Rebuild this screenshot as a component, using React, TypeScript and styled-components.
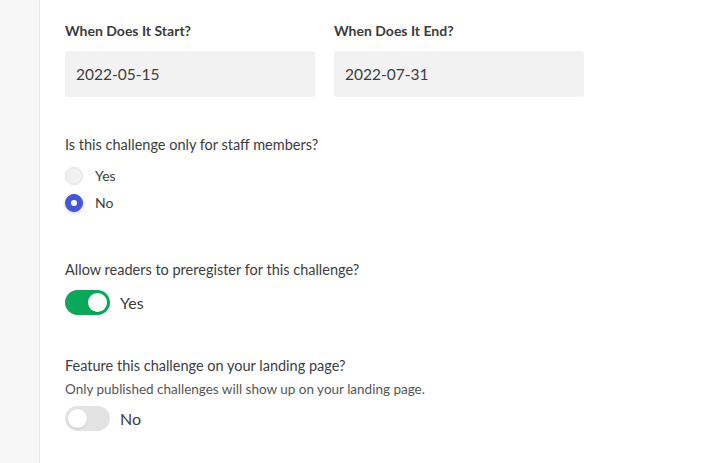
import React, { useState } from "react";
import styled, { createGlobalStyle } from "styled-components";

const Global = createGlobalStyle`
  html, body { margin: 0; padding: 0; background: #fff; }
  body { font-family: Lato, "Open Sans", "Liberation Sans", sans-serif; color: #3a3a3a; }
  * { box-sizing: border-box; }
`;

const Layout = styled.div`
  display: flex;
  min-height: 463px;
`;

const Sidebar = styled.aside`
  width: 40px;
  flex: none;
  background: #f7f7f7;
  border-right: 1px solid #e6e6e6;
`;

const Main = styled.main`
  flex: 1;
  padding: 22px 25px 20px 25px;
`;

const DateRow = styled.div`
  display: grid;
  grid-template-columns: 250px 250px;
  column-gap: 19px;
`;

const Field = styled.div`
  display: flex;
  flex-direction: column;
  gap: 11px;
`;

const FieldLabel = styled.label`
  font-size: 14px;
  font-weight: 700;
  line-height: 18px;
  color: #3b3b3b;
`;

const DateInput = styled.input`
  height: 46px;
  border: none;
  border-radius: 3px;
  background: #f2f2f2;
  padding: 0 11px;
  font-family: inherit;
  font-size: 15.5px;
  color: #3d3d3d;
  outline: none;
`;

const Section = styled.section<{ $top: number }>`
  margin-top: ${(p) => p.$top}px;
  display: flex;
  flex-direction: column;
`;

const Question = styled.div`
  font-size: 14.5px;
  line-height: 20px;
  color: #3d3d3d;
`;

const Hint = styled.div`
  margin-top: 4px;
  font-size: 13.5px;
  line-height: 18px;
  color: #555;
`;

const RadioList = styled.div`
  margin-top: 7px;
  display: flex;
  flex-direction: column;
`;

const RadioRow = styled.label`
  display: flex;
  align-items: center;
  height: 27px;
  gap: 12px;
  font-size: 14px;
  color: #3d3d3d;
  cursor: pointer;
`;

const RadioDot = styled.span<{ $checked: boolean }>`
  width: 18px;
  height: 18px;
  border-radius: 50%;
  flex: none;
  position: relative;
  background: ${(p) => (p.$checked ? "#4656db" : "#f1f1f1")};
  border: 1px solid ${(p) => (p.$checked ? "#4656db" : "#e2e2e2")};
  box-shadow: ${(p) => (p.$checked ? "0 1px 3px rgba(70,86,219,0.35)" : "none")};
  &::after {
    content: "";
    display: ${(p) => (p.$checked ? "block" : "none")};
    position: absolute;
    left: 50%;
    top: 50%;
    width: 6px;
    height: 6px;
    margin: -3px 0 0 -3px;
    border-radius: 50%;
    background: #fff;
  }
`;

const ToggleRow = styled.label<{ $top: number }>`
  margin-top: ${(p) => p.$top}px;
  display: flex;
  align-items: center;
  gap: 10px;
  font-size: 16px;
  color: #3d3d3d;
  cursor: pointer;
`;

const Track = styled.span<{ $on: boolean }>`
  width: 45px;
  height: 25px;
  border-radius: 13px;
  flex: none;
  position: relative;
  background: ${(p) => (p.$on ? "#0ba85a" : "#e3e3e3")};
  transition: background 0.2s;
`;

const Knob = styled.span<{ $on: boolean }>`
  position: absolute;
  top: 3px;
  left: ${(p) => (p.$on ? "23px" : "3px")};
  width: 19px;
  height: 19px;
  border-radius: 50%;
  background: #fff;
  box-shadow: 0 1px 2px rgba(0, 0, 0, 0.12);
  transition: left 0.2s;
`;

function Toggle({ on, label, top, onClick }: { on: boolean; label: string; top: number; onClick: () => void }) {
  return (
    <ToggleRow $top={top} onClick={onClick}>
      <Track $on={on}>
        <Knob $on={on} />
      </Track>
      {label}
    </ToggleRow>
  );
}

export default function App() {
  const [staff, setStaff] = useState<"yes" | "no">("no");
  const [prereg, setPrereg] = useState(true);
  const [feature, setFeature] = useState(false);

  return (
    <>
      <Global />
      <Layout>
        <Sidebar />
        <Main>
          <DateRow>
            <Field>
              <FieldLabel>When Does It Start?</FieldLabel>
              <DateInput defaultValue="2022-05-15" />
            </Field>
            <Field>
              <FieldLabel>When Does It End?</FieldLabel>
              <DateInput defaultValue="2022-07-31" />
            </Field>
          </DateRow>

          <Section $top={38}>
            <Question>Is this challenge only for staff members?</Question>
            <RadioList>
              <RadioRow onClick={() => setStaff("yes")}>
                <RadioDot $checked={staff === "yes"} />
                Yes
              </RadioRow>
              <RadioRow onClick={() => setStaff("no")}>
                <RadioDot $checked={staff === "no"} />
                No
              </RadioRow>
            </RadioList>
          </Section>

          <Section $top={44}>
            <Question>Allow readers to preregister for this challenge?</Question>
            <Toggle top={10} on={prereg} label={prereg ? "Yes" : "No"} onClick={() => setPrereg(!prereg)} />
          </Section>

          <Section $top={41}>
            <Question>Feature this challenge on your landing page?</Question>
            <Hint>Only published challenges will show up on your landing page.</Hint>
            <Toggle top={8} on={feature} label={feature ? "Yes" : "No"} onClick={() => setFeature(!feature)} />
          </Section>
        </Main>
      </Layout>
    </>
  );
}
